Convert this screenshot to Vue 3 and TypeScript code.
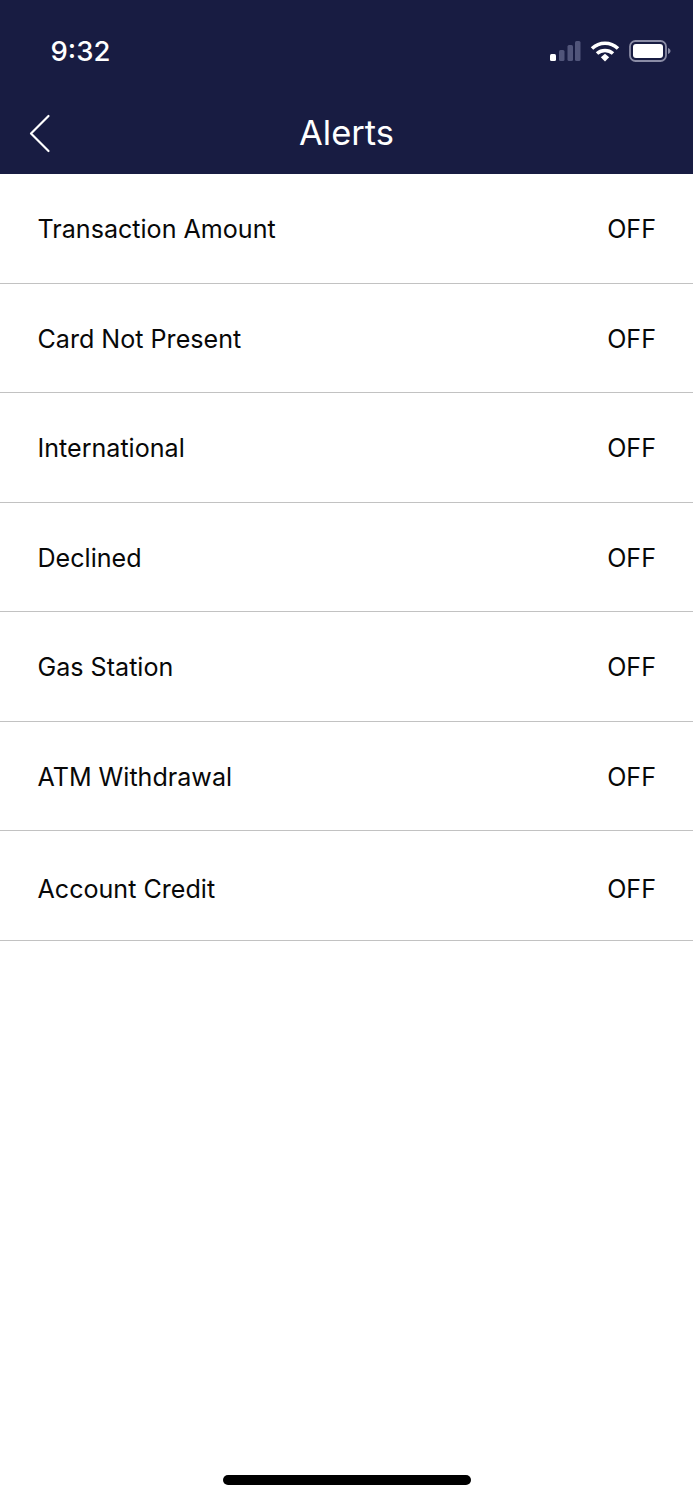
<script setup lang="ts">
const rows: string[] = [
  'Transaction Amount',
  'Card Not Present',
  'International',
  'Declined',
  'Gas Station',
  'ATM Withdrawal',
  'Account Credit',
]
</script>

<template>
  <div class="screen">
    <header class="header">
      <div class="status">
        <span class="time">9:32</span>
        <div class="status-icons">
          <svg class="signal" width="32" height="22" viewBox="0 0 32 22">
            <rect x="1" y="14" width="6" height="7" rx="1.5" fill="#fff" />
            <rect x="10" y="10" width="5.5" height="11" rx="1.5" fill="#51557a" />
            <rect x="18.5" y="5" width="5.5" height="16" rx="1.5" fill="#51557a" />
            <rect x="26" y="1" width="5.5" height="20" rx="1.5" fill="#51557a" />
          </svg>
          <svg class="wifi" width="30" height="22" viewBox="0 0 30 22">
            <path d="M2 8.5C9.5 1.5 20.5 1.5 28 8.5" fill="none" stroke="#fff" stroke-width="3.6" />
            <path d="M7 13.5C11.5 9.5 18.5 9.5 23 13.5" fill="none" stroke="#fff" stroke-width="3.6" />
            <path d="M10.8 17.3L15 13.8L19.2 17.3L15 21.6Z" fill="#fff" />
          </svg>
          <svg class="battery" width="42" height="22" viewBox="0 0 42 22">
            <rect x="1" y="1" width="36" height="20" rx="5.5" fill="none" stroke="#8b8da6" stroke-width="1.8" />
            <rect x="4" y="4" width="30" height="14" rx="3" fill="#fff" />
            <path d="M39 8v6c1.5-.5 2.5-1.6 2.5-3s-1-2.500-2.500-3z" fill="#8b8da6" />
          </svg>
        </div>
      </div>
      <div class="nav">
        <svg class="back" width="24" height="40" viewBox="0 0 24 40">
          <path d="M20.500 3L3 20.500L20.500 38" fill="none" stroke="#fff" stroke-width="2.200" stroke-linecap="round" stroke-linejoin="round" />
        </svg>
        <h1 class="title">Alerts</h1>
      </div>
    </header>

    <ul class="list">
      <li v-for="row in rows" :key="row" class="row" :class="{ low: row === 'Account Credit' }">
        <span class="label">{{ row }}</span>
        <span class="value">OFF</span>
      </li>
    </ul>

    <div class="home-indicator"></div>
  </div>
</template>

<style scoped>
.screen {
  position: relative;
  width: 693px;
  height: 1500px;
  background: #fff;
  overflow: hidden;
  font-family: Inter, "Liberation Sans", sans-serif;
}
.header {
  box-sizing: border-box;
  height: 174px;
  background: #181c42;
  color: #fff;
  display: flex;
  flex-direction: column;
}
.status {
  display: flex;
  justify-content: space-between;
  align-items: center;
  height: 40px;
  margin-top: 31px;
  padding: 0 22px 0 50.5px;
}
.time {
  font-size: 27.5px;
  font-weight: 500;
  line-height: 40px;
}
.status-icons {
  display: flex;
  align-items: center;
  gap: 9px;
}
.nav {
  position: relative;
  display: flex;
  align-items: center;
  justify-content: center;
  height: 60px;
  margin-top: 32px;
}
.back {
  position: absolute;
  left: 28px;
  top: 10px;
}
.title {
  margin: 0;
  font-size: 34.5px;
  font-weight: 400;
  line-height: 60px;
}
.list {
  list-style: none;
  margin: 0;
  padding: 0;
}
.row {
  box-sizing: border-box;
  height: 109.55px;
  display: flex;
  align-items: center;
  justify-content: space-between;
  padding: 2px 37px 0 37.5px;
  border-bottom: 1px solid #c2c2c2;
  color: #080808;
  font-size: 25.1px;
}
.low .label,
.low .value {
  padding-top: 4px;
}
.home-indicator {
  position: absolute;
  left: 223px;
  top: 1475px;
  width: 248px;
  height: 10px;
  border-radius: 5px;
  background: #000;
}
</style>
